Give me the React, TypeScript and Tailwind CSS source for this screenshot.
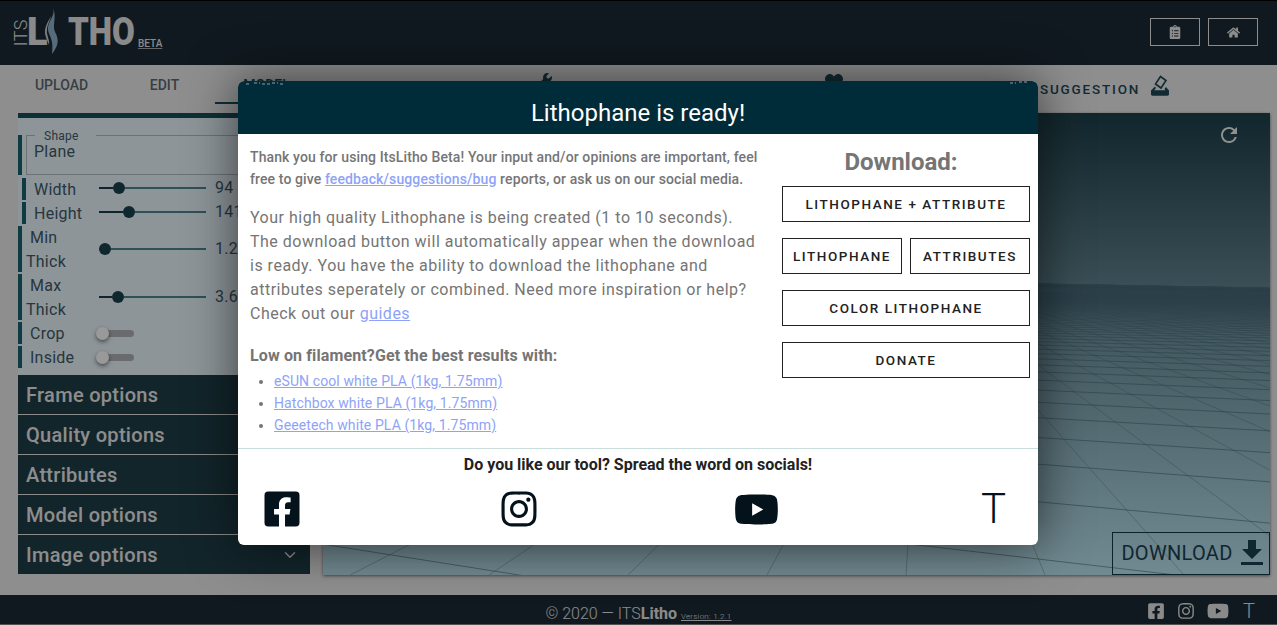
import React from "react";
import { FaClipboardList, FaHome, FaFacebookSquare, FaInstagram, FaYoutube, FaWrench, FaHeart } from "react-icons/fa";
import { FiChevronDown } from "react-icons/fi";
import { MdRefresh } from "react-icons/md";

const VP_A = { x: 925, y: 169 };

const familyA = Array.from({ length: 241 }, (_, i) => 722 + 139 * (i - 120));
const familyB = Array.from({ length: 110 }, (_, n) => 1 / (0.00455 + 0.00094 * (n - 3)));

const Flame = () => (
    <svg width="20" height="46" viewBox="0 0 20 46" className="shrink-0 -mt-[2px] -ml-[6px]">
        <path d="M11 0c3 8-6 13-5 22 1 6 6 9 4 24 7-9 7-15 3-22C10 17 15 9 11 0z" fill="#8fb4cc" />
        <path d="M9 8C6 14 3 18 3 24c0 5 3 9 4 13 1-6-3-10-2-15 0-5 3-9 4-14z" fill="#c9d3da" />
    </svg>
);

const Logo = () => (
    <div className="flex items-start text-[#e6e6e6] font-black h-[50px] w-[170px] pt-[2px] relative">
        <span className="[writing-mode:vertical-rl] rotate-180 text-[18px] font-light tracking-[0.5px] mt-[9px] ml-[15px] leading-[12px]">ITS</span>
        <span className="text-[38px] leading-[44px]">L</span>
        <Flame />
        <span className="text-[38px] leading-[44px] ml-[6px] origin-left scale-x-[0.87]">THO</span>
        <span className="absolute left-[138px] top-[29px] text-[10px] font-medium leading-[14px] underline decoration-[#aaa]">BETA</span>
    </div>
);

const Marker = ({ inset }: { inset?: boolean }) => (
    <div className={inset ? "w-1 ml-1 shrink-0 self-stretch bg-[#19646f]" : "w-1 shrink-0 self-stretch bg-[#19646f]"} />
);

const Slider = ({ filled, value, raised }: { filled: number; value: string; raised?: boolean }) => (
    <div className={raised ? "flex items-center w-[160px] shrink-0 mb-[2px]" : "flex items-center w-[160px] shrink-0"}>
        <div className="flex items-center w-[107px]">
            <div className="h-[2px] bg-[#193f4b]" style={{ width: filled }} />
            <div className="w-3 h-3 rounded-full bg-[#19414e] shrink-0" />
            <div className="h-[2px] flex-1 bg-[#4e8590]" />
        </div>
        <span className="ml-[9px] tracking-[0.3px]">{value}</span>
    </div>
);

const Toggle = () => (
    <div className="flex items-center w-[38px]">
        <div className="w-[13px] h-[13px] rounded-full bg-white shadow-[0_2px_4px_rgba(0,0,0,0.5)] relative shrink-0" />
        <div className="h-[7px] w-[32px] -ml-[7px] rounded-full bg-[#b0b3b8]" />
    </div>
);

const SideRows = () => (
    <div className="bg-[#ecf8ff] text-[#435a68] text-[16px] leading-[24px] tracking-[0.25px] h-[262px] border-t-[5px] border-[#17505b] pt-[17px]">
        <div className="flex h-10">
            <Marker />
            <fieldset className="ml-1 w-[300px] h-[47px] border border-[#b8bec4] pl-[7px] -mt-[7px] shrink-0 self-start">
                <legend className="ml-px pl-[9px] pr-[17px] pt-[2px] text-[12px] leading-[12px]">Shape</legend>
                <div className="leading-[18px] mt-px">Plane</div>
            </fieldset>
        </div>
        <div className="flex h-[22px] mt-[3px] items-center">
            <Marker inset />
            <span className="ml-2 w-[65px] mt-[2px] shrink-0">Width</span>
            <Slider filled={14} value="94" raised />
        </div>
        <div className="flex h-[22px] mt-[2px] items-center">
            <Marker inset />
            <span className="ml-2 w-[65px] mt-[2px] shrink-0">Height</span>
            <Slider filled={24} value="141" raised />
        </div>
        <div className="flex h-[46px] mt-[2px] items-center">
            <Marker />
            <span className="ml-1 w-[73px] pr-8 indent-1 mt-[2px] shrink-0">Min Thick</span>
            <Slider filled={0} value="1.2" />
        </div>
        <div className="flex h-[46px] mt-[2px] items-center">
            <Marker />
            <span className="ml-1 w-[73px] pr-8 indent-1 mt-[2px] shrink-0">Max Thick</span>
            <Slider filled={13} value="3.6" />
        </div>
        <div className="flex h-[22px] mt-[2px] items-center">
            <Marker />
            <span className="ml-2 w-[66px] mt-[2px] shrink-0">Crop</span>
            <Toggle />
        </div>
        <div className="flex h-[22px] mt-[2px] items-center">
            <Marker />
            <span className="ml-2 w-[66px] mt-[2px] shrink-0">Inside</span>
            <Toggle />
        </div>
    </div>
);

const Accordion = () => (
    <div className="bg-[#1e3e48] text-[#ebebeb] text-[20px] font-medium tracking-[0.3px]">
        {["Frame options", "Quality options", "Attributes", "Model options", "Image options"].map((t, i) => (
            <div key={t} className={i < 4 ? "h-10 flex items-center justify-between px-2 pt-px border-b border-[#e8e8e8]" : "h-[39px] flex items-center justify-between px-2 pt-px"}>
                <span>{t}</span>
                {i === 4 && <FiChevronDown size={18} className="mr-[3px]" />}
            </div>
        ))}
    </div>
);

const Viewport = () => (
    <div className="relative w-[947px] h-[462px] overflow-hidden shadow-[0_1px_3px_rgba(0,0,0,0.5)] bg-gradient-to-b from-[#1e414b] via-[#60838e] via-[37%] to-[#bde6f2]">
        <svg width="947" height="462" viewBox="0 0 947 462" className="block">
            {familyA.map((x) => (
                <line key={x} x1={VP_A.x - 323} y1={VP_A.y} x2={x} y2={462} stroke="#4a6c7a" strokeWidth="0.6" opacity="0.6" />
            ))}
            {familyB.map((h) => {
                // h is the drop below the horizon at the modal's right edge
                const k = (947 + 1669) / (715 + 1669);
                return <line key={h} x1={-20} y1={VP_A.y + (h * 1649) / (715 + 1669)} x2={947} y2={VP_A.y + h * k} stroke="#4a6c7a" strokeWidth="1" opacity="0.6" />;
            })}
        </svg>
        <MdRefresh size={24} className="absolute top-[10px] right-[29px] text-[#eeeeee]" />
        <div className="absolute right-0 bottom-0 w-[158px] h-[43px] border border-[#153a45] flex items-center justify-center gap-2 pl-[2px] text-[#1a4250] text-[20px] tracking-[0.3px]">
            <span className="-mt-[2px]">DOWNLOAD</span>
            <svg width="22" height="26" viewBox="0 0 22 26" className="-mt-[2px]"><path d="M7 0h8v9h6L11 19 1 9h6zM0 22h22v3H0z" fill="#1a4250" /></svg>
        </div>
    </div>
);

const DlButton = ({ children, className }: { children: string; className?: string }) => (
    <button className={`h-9 border border-[#222] text-[13.5px] font-medium tracking-[1.55px] text-[#222] ${className ?? "w-full"}`}>{children}</button>
);

const Modal = () => (
    <div className="absolute left-[238px] top-[81px] w-[800px] h-[464px] rounded-[6px] overflow-hidden bg-white shadow-[0_0_50px_rgba(0,0,0,0.6)]">
        <div className="relative h-[53px] bg-[#002b38] text-white text-[24px] flex items-center justify-center pt-[10px]">
            Lithophane is ready!
            <svg width="800" height="6" viewBox="0 0 800 6" className="absolute left-0 top-0">
                <path d="M8 3h4M16 2h6M24 3h8M34 2h6M42 3h5M772 2h6M781 1h8" stroke="#8aa0a8" strokeWidth="1" strokeDasharray="3 2" fill="none" />
            </svg>
        </div>
        <div className="flex h-[314px]">
            <div className="w-[532px] pl-3 pt-[12px] text-[#757575]">
                <p className="text-[14px] font-medium leading-[22px] tracking-[0.11px] w-[516px]">
                    Thank you for using ItsLitho Beta! Your input and/or opinions are important, feel free to give <a className="underline text-[#8ea3f7]">feedback/suggestions/bug</a> reports, or ask us on our social media.
                </p>
                <p className="mt-4 text-[16px] leading-[24px] tracking-[0.5px] w-[510px]">
                    Your high quality Lithophane is being created (1 to 10 seconds). The download button will automatically appear when the download is ready. You have the ability to download the lithophane and attributes seperately or combined. Need more inspiration or help? Check out our <a className="underline text-[#8ea3f7]">guides</a>
                </p>
                <p className="mt-[19px] text-[16px] font-bold leading-[22px] tracking-[0.12px]">Low on filament?Get the best results with:</p>
                <ul className="list-disc pl-6 mt-[3px] text-[14px] leading-[22px] tracking-[0.1px]">
                    <li><a className="underline text-[#8ea3f7]">eSUN cool white PLA (1kg, 1.75mm)</a></li>
                    <li><a className="underline text-[#8ea3f7]">Hatchbox white PLA (1kg, 1.75mm)</a></li>
                    <li><a className="underline text-[#8ea3f7]">Geeetech white PLA (1kg, 1.75mm)</a></li>
                </ul>
            </div>
            <div className="w-[248px] ml-[12px] pt-[14px]">
                <div className="text-[24px] font-bold text-[#757575] text-center leading-[28px] -ml-[10px]">Download:</div>
                <div className="flex flex-col gap-4 mt-[10px]">
                    <DlButton>LITHOPHANE + ATTRIBUTE</DlButton>
                    <div className="flex gap-2">
                        <DlButton className="w-[120px]">LITHOPHANE</DlButton>
                        <DlButton className="w-[120px]">ATTRIBUTES</DlButton>
                    </div>
                    <DlButton>COLOR LITHOPHANE</DlButton>
                    <DlButton>DONATE</DlButton>
                </div>
            </div>
        </div>
        <div className="border-t border-[#c9dedc] h-[97px]">
            <div className="text-center text-[16px] font-bold text-[#222] leading-[20px] pt-[6px]">Do you like our tool? Spread the word on socials!</div>
            <div className="flex items-center pl-6 mt-3 text-[#03121b] h-[44px]">
                <FaFacebookSquare size={40} />
                <FaInstagram size={40} className="ml-[197px]" />
                <FaYoutube size={45} className="ml-[195px]" />
                <span className="text-[42px] font-light leading-[44px] ml-[202px]">T</span>
            </div>
        </div>
    </div>
);

const App = () => {
    return (
        <div className="relative w-[1277px] h-[625px] overflow-hidden flex flex-col bg-[#ededed] font-['Roboto',sans-serif]">
            <div className="h-[65px] shrink-0 bg-[#1b2b35] border-t border-black flex items-center justify-between pr-[19px]">
                <Logo />
                <div className="flex gap-2 -mt-[2px]">
                    <div className="w-[50px] h-7 border border-[#ebebeb] flex items-center justify-center text-[#ebebeb]"><FaClipboardList size={14} /></div>
                    <div className="w-[50px] h-7 border border-[#ebebeb] flex items-center justify-center text-[#ebebeb]"><FaHome size={13} /></div>
                </div>
            </div>

            <div className="h-[48px] shrink-0 flex items-start pl-[10px] text-[14px] font-medium text-[#5b6a72] relative">
                <div className="w-[103px] text-center pt-[10px]">UPLOAD</div>
                <div className="w-[103px] text-center pt-[10px]">EDIT</div>
                <div className="w-[103px] text-center pt-[10px] h-[39px] -ml-px border-b-2 border-[#17505b] text-[#1e4856]">MODEL</div>
                <FaWrench size={16} className="ml-[218px] mt-[8px] text-[#1e4856]" />
                <FaHeart size={18} className="ml-[273px] mt-[8px] text-[#1e4856]" />
                <div className="ml-[197px] mt-[14px] text-[13.5px] tracking-[1.8px] text-[#1e4856]">SUGGESTION</div>
                <svg width="20" height="22" viewBox="0 0 20 22" className="ml-[10px] mt-[10px]">
                    <path d="M10.5 1.5l5.5 4-5 7.5-5.5-4z" fill="none" stroke="#1e4856" strokeWidth="1.6" />
                    <path d="M5 11.5L1 15.500v3a2 2 0 0 0 2 2h14a2 2 0 0 0 2-2v-3l-3-3.500-1.500 2 1 1.500H4l2-2.500z" fill="#1e4856" />
                    <rect x="1" y="15.500" width="18" height="5" rx="1.500" fill="#1e4856" />
                </svg>
            </div>

            <div className="flex-1 flex pl-[18px] pr-[7px] gap-[13px]">
                <div className="w-[292px] shrink-0">
                    <SideRows />
                    <Accordion />
                </div>
                <Viewport />
            </div>

            <div className="h-[30px] shrink-0 bg-[#1b2b35] border-b border-[#888] flex items-center relative text-[#e6e6e6]">
                <div className="w-full text-center text-[16px] font-light pt-[8px]">
                    © 2020 — ITS<b className="font-bold">Litho</b> <span className="text-[8px] underline tracking-[0.25px]">Version: 1.2.1</span>
                </div>
                <div className="absolute right-[22px] top-[5px] flex items-center gap-[12px] text-[#e6e6e6]">
                    <FaFacebookSquare size={18} />
                    <FaInstagram size={18} />
                    <FaYoutube size={22} />
                    <span className="text-[20px] font-light leading-[22px] ml-[2px]">T</span>
                </div>
            </div>

            <div className="absolute inset-0 bg-black/40" />
            <Modal />
        </div>
    );
};

export default App;
